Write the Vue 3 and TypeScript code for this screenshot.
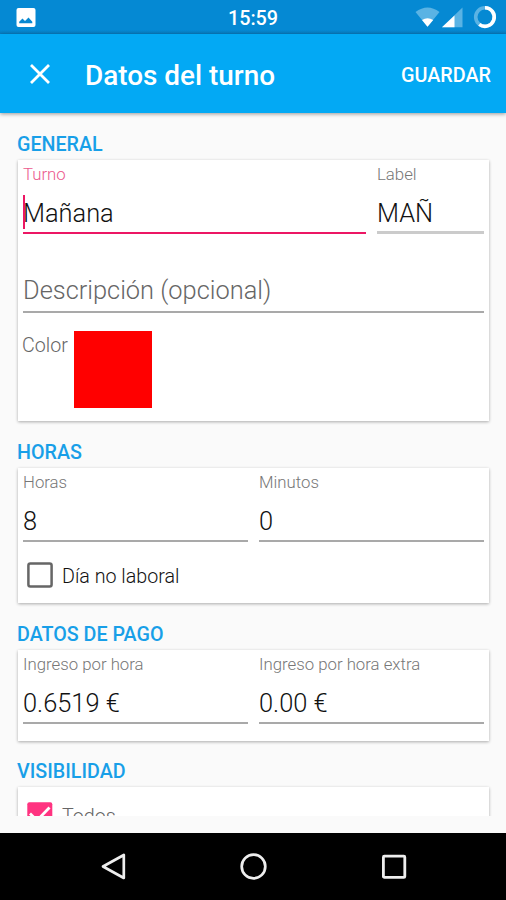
<script setup lang="ts">
import { ref } from 'vue'

const shiftName = ref<string>('Mañana')
const shiftLabel = ref<string>('MAÑ')
const hours = ref<string>('8')
const minutes = ref<string>('0')
const hourlyPay = ref<string>('0.6519 €')
const extraPay = ref<string>('0.00 €')
</script>

<template>
  <div class="screen">
    <header class="status">
      <svg class="photo" width="20" height="20" viewBox="0 0 20 20">
        <rect x="0.5" y="0" width="19" height="19" rx="2" fill="#fff" />
        <path d="M3.2 15.3V13.8L6.5 10.5 9 13 12.5 9.5 16.3 13.8V15.3Z" fill="#0788d1" />
      </svg>
      <span class="clock">15:59</span>
      <svg class="signals" width="82" height="24" viewBox="0 0 82 24">
        <path d="M-0.5 7Q11.5 -2 23.5 7L11.5 21.8Z" fill="#5ab3e4" />
        <path d="M6 15Q11.5 11.5 17.2 15L11.5 21.8Z" fill="#fff" />
        <path d="M46.5 2.5V22.3H26Z" fill="#5ab3e4" />
        <path d="M38.5 10.5V22.3H26Z" fill="#fff" />
        <circle cx="69" cy="12" r="9.3" fill="none" stroke="#5ab3e4" stroke-width="3.6" />
        <path d="M69 2.7A9.3 9.3 0 1 1 63.3 19.4" fill="none" stroke="#fff" stroke-width="3.6" />
      </svg>
    </header>

    <div class="appbar">
      <svg class="close" width="20" height="20" viewBox="0 0 20 20">
        <path d="M1 1 19 19M19 1 1 19" stroke="#fff" stroke-width="2.8" fill="none" />
      </svg>
      <h1 class="title">Datos del turno</h1>
      <button class="save">GUARDAR</button>
    </div>

    <main class="content">
      <h2 class="heading">GENERAL</h2>
      <section class="card tall">
        <div class="row">
          <div class="field wide active">
            <span class="label">Turno</span>
            <span class="value name">{{ shiftName }}</span>
          </div>
          <div class="field pale">
            <span class="label">Label</span>
            <span class="value">{{ shiftLabel }}</span>
          </div>
        </div>
        <div class="hint">Descripción (opcional)</div>
        <div class="color">
          <span class="color-label">Color</span>
          <span class="swatch"></span>
        </div>
      </section>

      <h2 class="heading">HORAS</h2>
      <section class="card mid">
        <div class="row">
          <div class="field">
            <span class="label">Horas</span>
            <span class="value">{{ hours }}</span>
          </div>
          <div class="field">
            <span class="label">Minutos</span>
            <span class="value">{{ minutes }}</span>
          </div>
        </div>
        <div class="check">
          <svg width="26" height="26" viewBox="0 0 26 26">
            <rect x="1.4" y="1.4" width="23.2" height="23.2" rx="2" fill="none" stroke="#666" stroke-width="2.5" />
          </svg>
          <span class="check-text">Día no laboral</span>
        </div>
      </section>

      <h2 class="heading">DATOS DE PAGO</h2>
      <section class="card short">
        <div class="row">
          <div class="field">
            <span class="label">Ingreso por hora</span>
            <span class="value">{{ hourlyPay }}</span>
          </div>
          <div class="field">
            <span class="label">Ingreso por hora extra</span>
            <span class="value">{{ extraPay }}</span>
          </div>
        </div>
      </section>

      <h2 class="heading vis">VISIBILIDAD</h2>
      <section class="card last">
        <div class="check muted">
          <svg width="26" height="26" viewBox="0 0 26 26">
            <rect x="0.3" y="0.3" width="25" height="25.4" rx="2" fill="#ff3380" />
            <path d="M3 11.5 10 18.5 22.5 5.5" fill="none" stroke="#fff" stroke-width="2.8" />
          </svg>
          <span class="check-text">Todos</span>
        </div>
      </section>
    </main>

    <nav class="nav">
      <svg width="26" height="28" viewBox="0 0 26 28">
        <path d="M2 13.5 22.8 2V25Z" fill="none" stroke="#eee" stroke-width="2.7" stroke-linejoin="round" />
      </svg>
      <svg width="28" height="28" viewBox="0 0 28 28">
        <circle cx="13.5" cy="13.5" r="11.8" fill="none" stroke="#eee" stroke-width="2.7" />
      </svg>
      <svg width="26" height="28" viewBox="0 0 26 28">
        <rect x="2.4" y="3.2" width="21.4" height="21.2" rx="1" fill="none" stroke="#eee" stroke-width="2.8" />
      </svg>
    </nav>
  </div>
</template>

<style>
body {
  margin: 0;
  background: #fafafa;
}
</style>

<style scoped>
.screen {
  width: 506px;
  height: 900px;
  display: flex;
  flex-direction: column;
  overflow: hidden;
  background: #fafafa;
  font-family: Roboto, "Liberation Sans", sans-serif;
}
.status {
  box-sizing: border-box;
  height: 34px;
  flex: none;
  display: grid;
  grid-template-columns: 1fr auto 1fr;
  align-items: center;
  padding: 0 8px 0 16px;
  background: linear-gradient(#0589d3 0 30px, #077bbf 34px);
}
.photo {
  margin-top: 1px;
}
.clock {
  margin-right: 8px;
  font-size: 19.8px;
  font-weight: 500;
  line-height: 22px;
  padding-top: 3px;
  color: #fff;
}
.signals {
  justify-self: end;
  overflow: visible;
}
.appbar {
  box-sizing: border-box;
  height: 79px;
  flex: none;
  display: flex;
  align-items: center;
  padding: 1px 15px 0 30px;
  background: #03a9f4;
  color: #fff;
  box-shadow: 0 1px 4px rgba(0, 0, 0, 0.4);
  z-index: 1;
}
.title {
  margin: 3px 0 0 35px;
  font-size: 27.9px;
  font-weight: 500;
  line-height: 34px;
  white-space: nowrap;
}
.save {
  margin: 4px 0 0 auto;
  padding: 0;
  border: 0;
  background: none;
  font: 500 19.8px/24px Roboto, sans-serif;
  color: #fff;
}
.content {
  height: 703px;
  flex: none;
  overflow: hidden;
}
.heading {
  box-sizing: border-box;
  height: 47px;
  margin: 0;
  padding: 20px 0 0 17px;
  font-size: 19.7px;
  font-weight: 500;
  line-height: 24px;
  color: #189fe8;
}
.vis {
  height: 46px;
  padding-top: 19px;
}
.card {
  box-sizing: border-box;
  margin: 0 17px 0 18px;
  padding: 0 5px;
  background: #fff;
  box-shadow: 0 1px 3px rgba(0, 0, 0, 0.32);
}
.tall {
  height: 261px;
}
.mid {
  height: 135px;
}
.short {
  height: 91px;
}
.last {
  height: 120px;
  padding-top: 15px;
}
.row {
  display: flex;
  gap: 11px;
}
.field {
  box-sizing: border-box;
  height: 74px;
  flex: 1;
  display: flex;
  flex-direction: column;
  padding-top: 4px;
  border-bottom: 2px solid #a9a9a9;
}
.wide {
  flex: none;
  width: 343px;
}
.active {
  border-bottom-color: #ec1764;
}
.active .label {
  color: #ec5a8e;
}
.pale {
  border-bottom: 3px solid #cbcbcb;
}
.label {
  font-size: 16.8px;
  font-weight: 300;
  line-height: 20px;
  color: #777;
  white-space: nowrap;
}
.value {
  position: relative;
  align-self: flex-start;
  margin-top: 14px;
  font-size: 25.4px;
  font-weight: 300;
  line-height: 30px;
  color: #111;
  white-space: nowrap;
}
.name::before {
  content: "";
  position: absolute;
  left: 0;
  top: -3px;
  width: 2px;
  height: 34px;
  background: #ec1764;
}
.hint {
  box-sizing: border-box;
  height: 79px;
  padding-top: 41px;
  border-bottom: 2px solid #a9a9a9;
  font-size: 25.4px;
  font-weight: 300;
  line-height: 30px;
  color: #666;
}
.color {
  display: flex;
  padding-top: 18px;
}
.color-label {
  width: 52px;
  margin-left: -1px;
  font-size: 19.7px;
  font-weight: 300;
  line-height: 30px;
  color: #666;
}
.swatch {
  width: 78px;
  height: 77px;
  background: #f00;
}
.check {
  display: flex;
  align-items: center;
  gap: 9px;
  margin-top: 20px;
  padding-left: 4px;
  font-size: 19.7px;
  font-weight: 300;
  line-height: 26px;
  color: #111;
}
.check-text {
  padding-top: 2px;
  margin-bottom: -2px;
}
.muted {
  margin-top: 0;
  color: #666;
}
.nav {
  box-sizing: border-box;
  height: 67px;
  flex: none;
  margin-top: 17px;
  display: flex;
  justify-content: space-between;
  padding: 20px 99px 0 101px;
  background: #000;
}
</style>
